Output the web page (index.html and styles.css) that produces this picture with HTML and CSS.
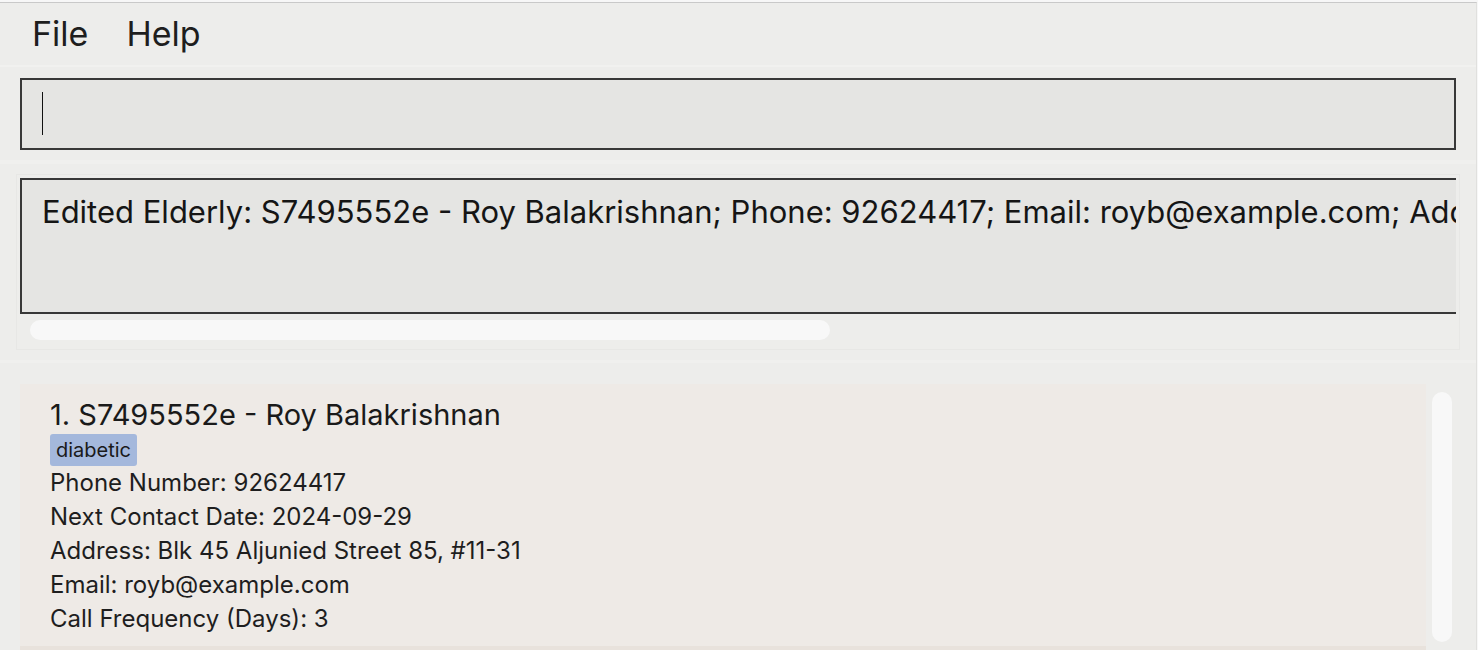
FILE: index.html
```html
<!DOCTYPE html>
<html>
<head>
<meta charset="utf-8">
<title>Elderly Tracker</title>
<link rel="stylesheet" href="styles.css">
</head>
<body>
<div class="window">
  <div class="menubar">
    <span class="menu-item">File</span>
    <span class="menu-item">Help</span>
  </div>
  <div class="section command-section">
    <div class="command-box"><span class="caret"></span></div>
  </div>
  <div class="section result-section">
    <div class="result-pane">
      <div class="result-viewport">
        <div class="result-box">Edited Elderly: S7495552e - Roy Balakrishnan; Phone: 92624417; Email: royb@example.com; Address: Blk 45 Aljunied Street 85, #11-31; Tags: [diabetic]</div>
      </div>
      <div class="hscroll"><div class="hthumb"></div></div>
    </div>
  </div>
  <div class="section list-section">
    <div class="list">
      <div class="card">
        <div class="card-title">1. S7495552e - Roy Balakrishnan</div>
        <div class="tags"><span class="tag">diabetic</span></div>
        <div class="field">Phone Number: 92624417</div>
        <div class="field">Next Contact Date: 2024-09-29</div>
        <div class="field">Address: Blk 45 Aljunied Street 85, #11-31</div>
        <div class="field">Email: royb@example.com</div>
        <div class="field">Call Frequency (Days): 3</div>
      </div>
      <div class="card-next"></div>
    </div>
    <div class="vscroll"><div class="vthumb"></div></div>
  </div>
</div>
</body>
</html>
```
FILE: styles.css
```css
* { box-sizing: border-box; }
html, body {
  margin: 0;
  padding: 0;
  background: #f7f7f7;
  height: 650px;
  overflow: hidden;
}
body {
  font-family: Inter, "Noto Sans", "Liberation Sans", sans-serif;
  color: #1c1c1c;
}
.window {
  margin-top: 2px;
  width: 1477px;
  height: 648px;
  border-top: 1px solid #c9c9c9;
  border-right: 1px solid #e0e0de;
  background: #ededeb;
  display: flex;
  flex-direction: column;
  overflow: hidden;
}
.menubar {
  flex: none;
  height: 64px;
  display: flex;
  align-items: center;
  gap: 38px;
  padding-left: 32px;
  border-bottom: 2px solid #f1f1ef;
}
.menu-item {
  font-size: 34px;
  line-height: 62px;
  color: #1e1e1e;
}
.command-section {
  flex: none;
  padding: 11px 20px 10px 20px;
  border-bottom: 4px solid #f0f0ee;
}
.command-box {
  height: 72px;
  border: 2px solid #383838;
  background: #e5e5e3;
  padding: 12px 0 0 20px;
}
.caret {
  display: block;
  width: 1px;
  height: 43px;
  background: #111;
}
.result-section {
  flex: none;
  padding: 10px 16px 10px 16px;
  height: 199px;
  border-bottom: 3px solid #f0f0ee;
}
.result-pane {
  height: 176px;
  border: 1px solid #e7e7e5;
  padding: 3px 3px 0 3px;
}
.result-viewport {
  height: 136px;
  overflow: hidden;
}
.result-box {
  width: 2700px;
  height: 136px;
  border: 2px solid #383838;
  background: #e5e5e3;
  padding: 14px 0 0 20px;
  font-size: 31px;
  line-height: 36px;
  white-space: nowrap;
  color: #151515;
}
.hscroll {
  padding: 6px 0 0 10px;
}
.hthumb {
  width: 800px;
  height: 20px;
  border-radius: 10px;
  background: #f8f8f8;
}
.list-section {
  flex: 1;
  display: flex;
  padding: 21px 0 0 20px;
  overflow: hidden;
}
.list {
  width: 1406px;
  display: flex;
  flex-direction: column;
}
.card {
  background: #eeeae6;
  padding: 14px 20px 10px 30px;
}
.card-next {
  height: 40px;
  background: #e8e2dc;
}
.card-title {
  font-size: 29px;
  line-height: 34px;
  color: #1a1a1a;
}
.tags {
  display: flex;
  margin-top: 2px;
}
.tag {
  background: #a4b8dc;
  border-radius: 3px;
  font-size: 20px;
  line-height: 32px;
  padding: 0 6px;
  color: #1a1a1a;
}
.field {
  font-size: 24px;
  line-height: 34px;
  color: #1e1e1e;
}
.vscroll {
  padding: 8px 0 0 6px;
}
.vthumb {
  width: 20px;
  height: 250px;
  border-radius: 10px;
  background: #f8f8f8;
}
```
